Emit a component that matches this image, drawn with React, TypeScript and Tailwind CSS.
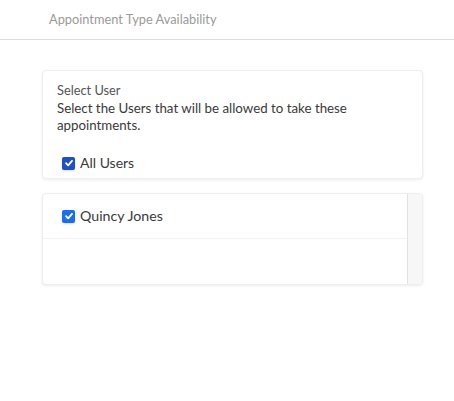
import React, { useState } from 'react';

function Check({ checked, onChange, color }: { checked: boolean; onChange: () => void; color: string }) {
  return (
    <button
      type="button"
      onClick={onChange}
      className={`flex h-[13px] w-[13px] items-center justify-center rounded-[2px] shadow-[0_1px_2px_rgba(0,0,0,0.15)] ${checked ? color : 'border border-gray-400 bg-white'}`}
    >
      {checked && (
        <svg viewBox="0 0 12 12" className="h-[10px] w-[10px]" fill="none" stroke="white" strokeWidth="2.2" strokeLinecap="round" strokeLinejoin="round">
          <path d="M2.5 6.3 5 8.8 9.6 3.4" />
        </svg>
      )}
    </button>
  );
}

export default function App() {
  const [allUsers, setAllUsers] = useState(true);
  const [quincy, setQuincy] = useState(true);

  return (
    <div className="min-h-[401px] w-full bg-white" style={{ fontFamily: 'Lato, "Open Sans", sans-serif' }}>
      <div className="flex h-[40px] items-center border-b border-[#dcdcdc] pl-[49px]">
        <span className="text-[12.8px] text-[#9a9a9a]">Appointment Type Availability</span>
      </div>

      <div className="ml-[42px] mr-[31px] mt-[30px] flex flex-col gap-[14px]">
        <div className="rounded-[4px] border border-[#eeeeee] bg-white pb-[7px] pl-[14px] pr-[15px] pt-[10px] shadow-[0_1px_3px_rgba(0,0,0,0.08)]">
          <div className="text-[12.8px] leading-[18px] text-[#555]">Select User</div>
          <p className="mt-[1px] text-[13.3px] leading-[17px] text-[#3a3a3a]">
            Select the Users that will be allowed to take these appointments.
          </p>
          <label className="mt-[21px] flex items-center gap-[5px] pl-[5px]">
            <Check checked={allUsers} onChange={() => setAllUsers(!allUsers)} color="bg-[#1f4fc2]" />
            <span className="text-[14px] leading-[16px] text-[#3a3a3a]">All Users</span>
          </label>
        </div>

        <div className="flex h-[92px] overflow-hidden rounded-[4px] border border-[#eeeeee] bg-white shadow-[0_1px_3px_rgba(0,0,0,0.08)]">
          <div className="flex-1">
            <label className="flex h-[45px] items-center gap-[5px] border-b border-[#f3f3f3] pl-[19px]">
              <Check checked={quincy} onChange={() => setQuincy(!quincy)} color="bg-[#1b6ef3]" />
              <span className="text-[14.2px] leading-[16px] text-[#3a3a3a]">Quincy Jones</span>
            </label>
          </div>
          <div className="w-[15px] border-l border-[#e3e3e3] bg-[#f7f7f7]" />
        </div>
      </div>
    </div>
  );
}
